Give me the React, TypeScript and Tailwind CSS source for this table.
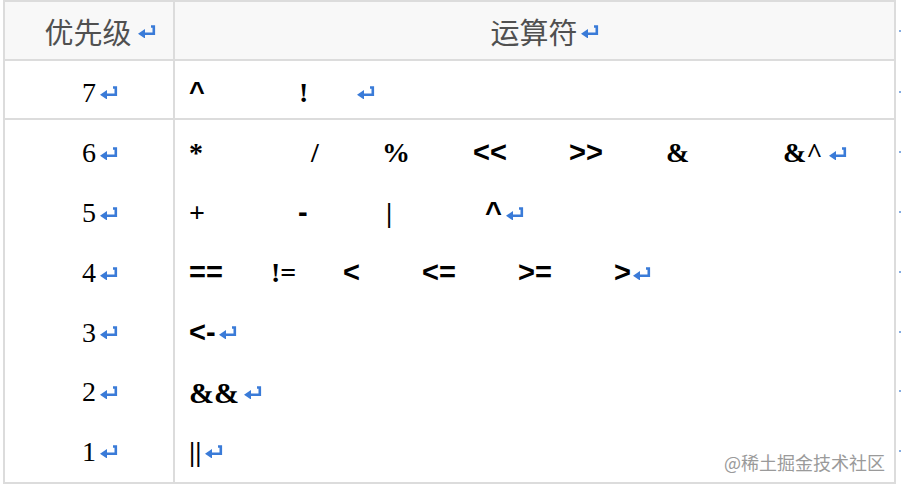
const serif = "font-['Liberation_Serif','Times_New_Roman',serif]";
const sans = "font-['Liberation_Sans',Arial,sans-serif]";

function ReturnMark() {
  return (
    <svg width="18" height="13" viewBox="0 0 18 13" className="shrink-0">
      <path d="M13 1.5h2.8v7.3H6" stroke="#3a7bd8" strokeWidth="2.6" fill="none" />
      <path d="M0 8.8L7 4v9.5z" fill="#3a7bd8" />
    </svg>
  );
}

type Op = { t: string; w?: number; s?: boolean };

const rows: { level: string; h: string; ops: Op[]; gap: string; size?: string }[] = [
  { level: "6", h: "h-[60px]", ops: [{ t: "*", w: 122 }, { t: "/", w: 71 }, { t: "%", w: 91 }, { t: "<<", w: 96, s: true }, { t: ">>", w: 97, s: true }, { t: "&", w: 117 }, { t: "&^" }], gap: "gap-[6px]" },
  { level: "5", h: "h-[60px]", ops: [{ t: "+", w: 109 }, { t: "-", w: 88, s: true }, { t: "|", w: 99 }, { t: "^", s: true }], gap: "gap-[4px]" },
  { level: "4", h: "h-[60px]", ops: [{ t: "==", w: 82, s: true }, { t: "!=", w: 72 }, { t: "<", w: 79, s: true }, { t: "<=", w: 96, s: true }, { t: ">=", w: 96, s: true }, { t: ">", s: true }], gap: "gap-[2px]" },
  { level: "3", h: "h-[59px]", ops: [{ t: "<-", s: true }], gap: "gap-[3px]" },
  { level: "2", h: "h-[60px]", ops: [{ t: "&&" }], gap: "gap-[5px]", size: "text-[30px]" },
  { level: "1", h: "h-[59px]", ops: [{ t: "||" }], gap: "gap-[4px]" },
];

const dotHeights = ["h-[61px]", "h-[61px]", "h-[60px]", "h-[60px]", "h-[60px]", "h-[59px]", "h-[60px]", "h-[59px]"];

function Ops({ ops, gap }: { ops: Op[]; gap: string }) {
  return (
    <div className={`flex items-center ${gap}`}>
      <div className="flex items-center">
        {ops.map((o, i) => (
          <span
            key={i}
            className={`inline-block whitespace-pre ${o.s ? `${sans} text-[29px]` : ""}`}
            style={o.w ? { width: o.w } : undefined}
          >
            {o.t}
          </span>
        ))}
      </div>
      <ReturnMark />
    </div>
  );
}

export default function App() {
  return (
    <div className="relative w-[902px] h-[490px] bg-white flex pl-[3px] overflow-hidden">
      <div className="w-[893px] h-[484px] border-2 border-[#dcdcdc] flex flex-col">
        {/* header */}
        <div className="flex h-[59px] bg-[#f8f8f8] border-b-2 border-[#dcdcdc] text-[#505050] text-[29px] font-['Noto_Sans_CJK_SC',sans-serif]">
          <div className="w-[170px] border-r-2 border-[#dcdcdc] flex items-center justify-center gap-[6px] pl-[22px] pt-[2px]">
            <span>优先级</span>
            <ReturnMark />
          </div>
          <div className="flex-1 flex items-center justify-center gap-[3px] pl-[20px] pt-[2px]">
            <span>运算符</span>
            <ReturnMark />
          </div>
        </div>

        {/* level 7 */}
        <div className="flex h-[59px] border-b-2 border-[#dcdcdc] text-[28px] text-black">
          <div className={`w-[170px] border-r-2 border-[#dcdcdc] flex items-center justify-center gap-[4px] pl-[22px] pt-[6px] ${serif}`}>
            <span>7</span>
            <ReturnMark />
          </div>
          <div className={`flex-1 flex items-center pl-[14px] pt-[6px] font-bold ${serif}`}>
            <span className={`inline-block w-[110px] ${sans} text-[27px]`}>^</span>
            <span className="inline-block w-[58px]">!</span>
            <ReturnMark />
          </div>
        </div>

        {/* levels 6..1 */}
        <div className="flex flex-1">
          <div className="w-[170px] border-r-2 border-[#dcdcdc] flex flex-col">
            {rows.map((r) => (
              <div key={r.level} className={`${r.h} flex items-center justify-center gap-[4px] pl-[22px] pt-[6px] text-[28px] ${serif}`}>
                <span>{r.level}</span>
                <ReturnMark />
              </div>
            ))}
          </div>
          <div className="flex-1 flex flex-col">
            {rows.map((r) => (
              <div key={r.level} className={`${r.h} flex items-center pl-[14px] pt-[6px] ${r.size ?? "text-[28px]"} font-bold ${serif}`}>
                <Ops ops={r.ops} gap={r.gap} />
              </div>
            ))}
          </div>
        </div>
      </div>

      {/* paragraph marks past the right edge */}
      <div className="flex flex-col pl-[3px]">
        {dotHeights.map((h, i) => (
          <div key={i} className={`${h} flex items-center`}>
            <div className="w-[2px] h-[2px] rounded-full bg-[#5b8fd6]" />
          </div>
        ))}
      </div>

      <div className="absolute right-[17px] top-[451px] text-[18px] leading-[22px] text-[#9a9a9a] font-['Noto_Sans_CJK_SC',sans-serif]">
        @稀土掘金技术社区
      </div>
    </div>
  );
}
